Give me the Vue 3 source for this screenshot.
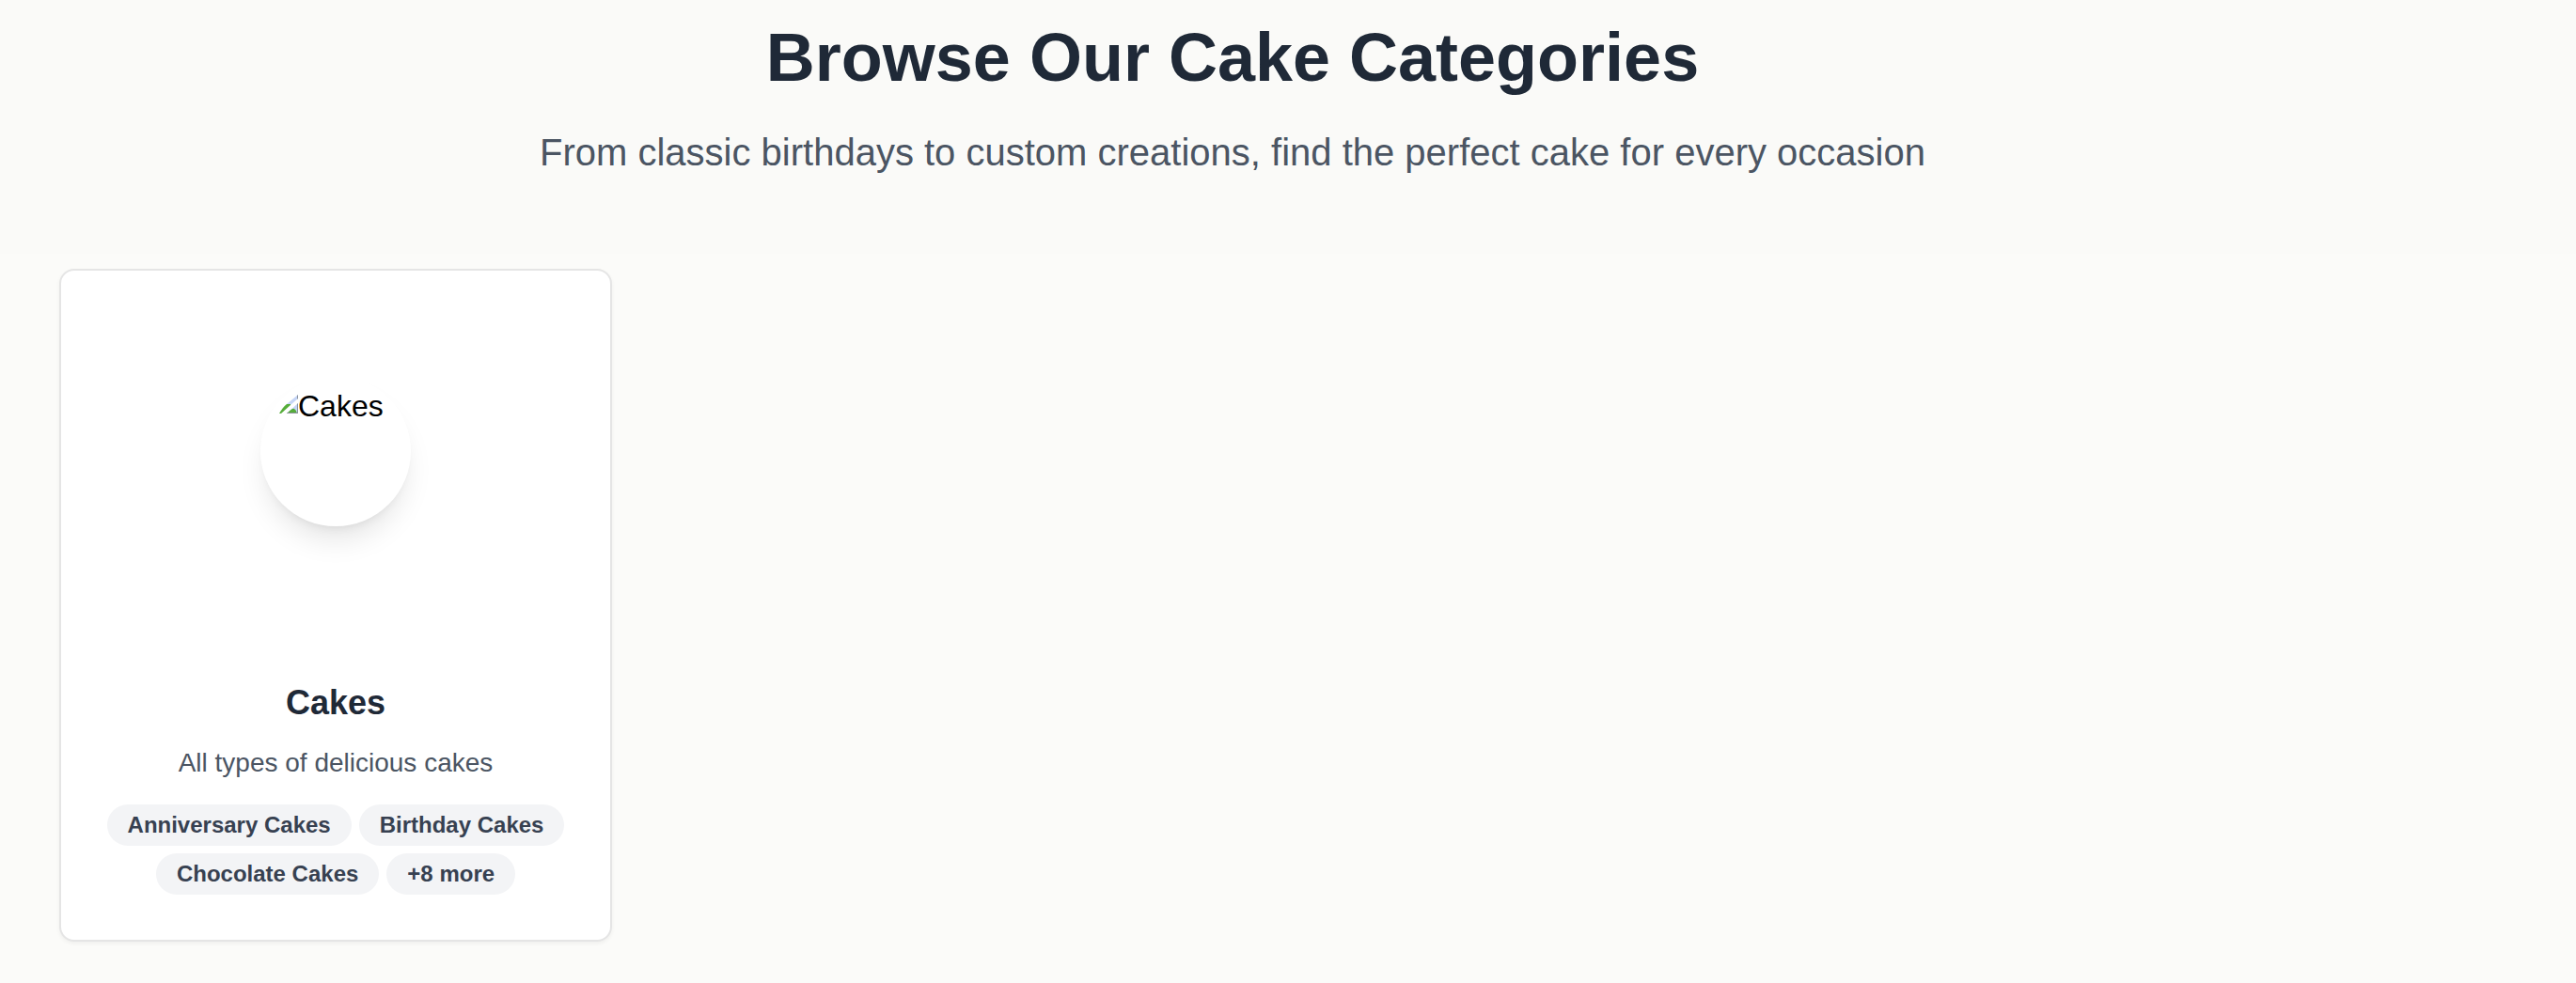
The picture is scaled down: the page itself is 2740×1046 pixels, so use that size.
<script setup>
const categories = [
  {
    name: 'Cakes',
    description: 'All types of delicious cakes',
    tags: ['Anniversary Cakes', 'Birthday Cakes', 'Chocolate Cakes', '+8 more'],
  },
]
</script>

<template>
  <main class="page">
    <header class="intro">
      <h1>Browse Our Cake Categories</h1>
      <p>From classic birthdays to custom creations, find the perfect cake for every occasion</p>
    </header>
    <section class="grid">
      <article v-for="category in categories" :key="category.name" class="card">
        <div class="media">
          <div class="avatar">
            <svg class="broken" viewBox="0 0 32 32" aria-hidden="true">
              <path d="M20 22L32 12V16L24 23Z" fill="#c5d5f6" />
              <path d="M12 32Q16 25 20 22H24V23L14 32Z" fill="#56ad3a" />
              <path d="M20 32L32 21V32Z" fill="#c5d5f6" />
              <path d="M20 32Q26 26 28 27Q30 28 31 32Z" fill="#56ad3a" />
              <path d="M31 13L32 12V16L31 17ZM31 22L32 21V32H20L21 31H31Z" fill="#8b929b" />
            </svg>
            <span>{{ category.name }}</span>
          </div>
        </div>
        <div class="body">
          <h2>{{ category.name }}</h2>
          <p>{{ category.description }}</p>
          <ul class="tags">
            <li v-for="tag in category.tags" :key="tag">{{ tag }}</li>
          </ul>
        </div>
      </article>
    </section>
  </main>
</template>

<style>
body {
  background: #fbfbf9;
}
</style>

<style scoped>
.page {
  font-family: Helvetica, "Liberation Sans", Arial, sans-serif;
  color: #1f2937;
}
h1, h2, p, ul {
  margin: 0;
  padding: 0;
}
.intro {
  padding: 20px 181px 80px 63px;
  text-align: center;
  background: #fafaf8;
}
h1 {
  font-size: 72px;
  line-height: 82px;
  font-weight: 700;
}
.intro p {
  margin-top: 32px;
  font-size: 40px;
  line-height: 56px;
  color: #4b5563;
}
.grid {
  display: grid;
  grid-template-columns: repeat(4, 1fr);
  gap: 48px;
  padding: 16px 181px 44px 63px;
}
.card {
  border: 2px solid #e5e5e5;
  border-radius: 16px;
  background: #fff;
  box-shadow: 0 2px 4px rgba(0, 0, 0, 0.05);
  overflow: hidden;
}
.media {
  height: 384px;
  display: flex;
  align-items: center;
  justify-content: center;
}
.avatar {
  box-sizing: border-box;
  width: 160px;
  height: 160px;
  padding: 14px 8px;
  display: flex;
  align-items: flex-start;
  border-radius: 50%;
  overflow: hidden;
  background: #fff;
  box-shadow: 0 20px 30px -6px rgba(0, 0, 0, 0.1), 0 8px 12px -8px rgba(0, 0, 0, 0.1);
  color: #000;
  font-size: 32px;
  line-height: 36px;
}
.broken {
  flex: none;
  width: 32px;
  height: 32px;
  margin-top: -6px;
}
.body {
  padding: 48px 40px;
  text-align: center;
}
h2 {
  font-size: 36px;
  line-height: 56px;
  font-weight: 700;
}
.body p {
  margin-top: 16px;
  font-size: 28px;
  line-height: 40px;
  color: #4b5563;
}
.tags {
  margin-top: 24px;
  display: flex;
  flex-wrap: wrap;
  justify-content: center;
  gap: 8px;
  list-style: none;
}
.tags li {
  padding: 6px 22px;
  border-radius: 22px;
  background: #f3f4f6;
  color: #374151;
  font-size: 24px;
  line-height: 32px;
  font-weight: 700;
}
</style>
